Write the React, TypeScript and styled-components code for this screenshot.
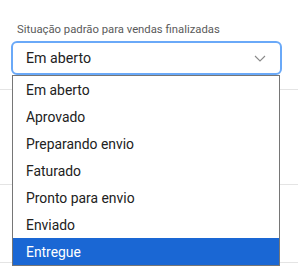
import React from "react";
import styled, { createGlobalStyle } from "styled-components";

const Global = createGlobalStyle`
  html, body { margin: 0; padding: 0; background: #ffffff; }
  body { font-family: Roboto, "Noto Sans", Arial, sans-serif; }
`;

const Page = styled.div`
  position: relative;
  width: 298px;
  height: 274px;
  overflow: hidden;
  background: #fff;
`;

const Field = styled.div`
  display: flex;
  flex-direction: column;
  gap: 4px;
  padding: 23px 16px 0 11px;
`;

const Label = styled.label`
  font-size: 11.3px;
  line-height: 14px;
  color: #5a5a5a;
  padding-left: 6px;
`;

const SelectWrap = styled.div`
  position: relative;
  width: 271px;
`;

const Select = styled.div`
  box-sizing: border-box;
  height: 34px;
  border: 2px solid #6aa9f8;
  border-radius: 6px;
  display: flex;
  align-items: center;
  justify-content: space-between;
  padding: 0 14px 0 13px;
  font-size: 14.2px;
  color: #222;
`;

const List = styled.ul`
  position: absolute;
  top: 100%;
  left: 1px;
  width: 268px;
  box-sizing: border-box;
  margin: 0;
  padding: 0;
  list-style: none;
  background: #fff;
  border: 1px solid #767676;
  z-index: 2;
`;

const Option = styled.li<{ $active?: boolean }>`
  height: 27px;
  display: flex;
  align-items: center;
  padding-left: 13px;
  font-size: 13.9px;
  color: ${(p) => (p.$active ? "#ffffff" : "#222")};
  background: ${(p) => (p.$active ? "#1a67d4" : "transparent")};
`;

const Rows = styled.div`
  display: flex;
  flex-direction: column;
  margin-top: 14px;
`;

const Row = styled.div<{ $h: number }>`
  height: ${(p) => p.$h}px;
  border-top: 1px solid #e4e4e4;
`;

const Chevron = () => (
  <svg width="12" height="7" viewBox="0 0 12 7" fill="none">
    <path d="M1 1l5 5 5-5" stroke="#8a8a8a" strokeWidth="1.1" />
  </svg>
);

const options = [
  "Em aberto",
  "Aprovado",
  "Preparando envio",
  "Faturado",
  "Pronto para envio",
  "Enviado",
  "Entregue",
];

export default function App() {
  return (
    <Page>
      <Global />
      <Field>
        <Label>Situação padrão para vendas finalizadas</Label>
        <SelectWrap>
          <Select>
            <span>Em aberto</span>
            <Chevron />
          </Select>
          <List>
            {options.map((o) => (
              <Option key={o} $active={o === "Entregue"}>
                {o}
              </Option>
            ))}
          </List>
        </SelectWrap>
      </Field>
      <Rows>
        <Row $h={94} />
        <Row $h={77} />
        <Row $h={20} />
      </Rows>
    </Page>
  );
}
